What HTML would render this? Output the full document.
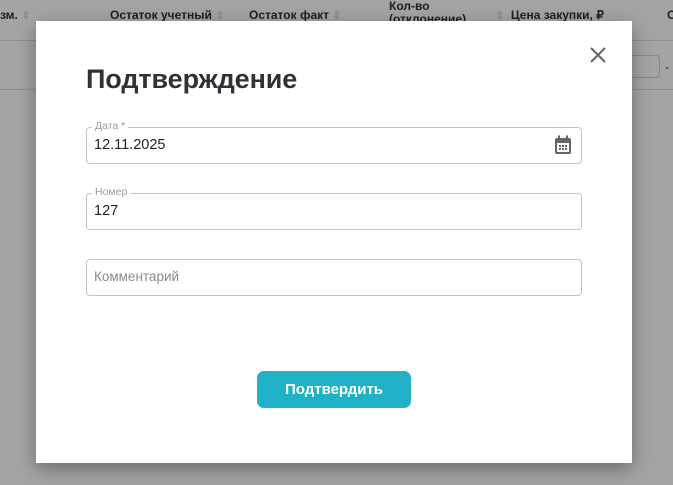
<!DOCTYPE html>
<html><head><style>
body{margin:0;width:673px;height:485px;overflow:hidden;background:#a4a4a4;font-family:"Liberation Sans",sans-serif;position:relative}
.h{position:absolute;font-size:12px;font-weight:bold;color:#1e1e1e}
.s{color:#8c8c8c;font-size:11px}
.line{position:absolute;left:0;right:0;height:1px;background:#8f8f8f}
.modal{position:absolute;left:36px;top:21px;width:596px;height:442px;background:#fff;box-shadow:0 6px 18px rgba(0,0,0,.35)}
.title{position:absolute;left:50px;top:43px;font-size:27px;font-weight:bold;color:#2f3337;letter-spacing:-0.1px}
.close{position:absolute;left:552px;top:24px}
.f{position:absolute;left:50px;width:494px;height:35px;border:1px solid #c4c4c4;border-radius:4px}
.lab{position:absolute;left:5px;top:-8px;background:#fff;padding:0 3px;font-size:10.5px;color:#9a9a9a}
.v{position:absolute;left:7px;top:9px;font-size:14.5px;color:#222}
.btn{position:absolute;left:221px;top:350px;width:154px;height:37px;background:#1fb2c6;border-radius:7px;color:#fff;font-weight:bold;font-size:15px;text-align:center;line-height:37px}
</style></head><body>
<div class="h" style="left:0;top:8px">зм. <span class="s">⇕</span></div>
<div class="h" style="left:110px;top:8px">Остаток учетный <span class="s">⇕</span></div>
<div class="h" style="left:249px;top:8px">Остаток факт <span class="s">⇕</span></div>
<div class="h" style="left:389px;top:0px;line-height:13px">Кол-во<br>(отклонение)</div>
<div class="h" style="left:495px;top:8px"><span class="s">⇕</span>&nbsp; Цена закупки, ₽</div>
<div class="h" style="left:667px;top:8px">С</div>
<div class="line" style="top:40px"></div>
<div class="line" style="top:89px"></div>
<div style="position:absolute;left:620px;top:55px;width:38px;height:21px;border:1px solid #888;border-radius:4px"></div>
<div class="h" style="left:665px;top:60px;font-weight:normal">-</div>
<div class="modal">
<div class="title">Подтверждение</div>
<svg class="close" width="20" height="20" viewBox="0 0 20 20"><path d="M3 3L17 17M17 3L3 17" stroke="#666" stroke-width="2"/></svg>
<div class="f" style="top:106px"><span class="lab">Дата <span style="color:#e07070">*</span></span><span class="v">12.11.2025</span>
<svg style="position:absolute;left:467px;top:7px" width="18" height="20" viewBox="0 0 18 20"><rect x="1" y="3" width="16" height="16" rx="2" fill="#666"/><rect x="3" y="8" width="12" height="9" fill="#fff"/><rect x="4" y="0.5" width="2" height="4" fill="#666"/><rect x="12" y="0.5" width="2" height="4" fill="#666"/><g fill="#666"><rect x="5" y="10" width="2" height="2"/><rect x="8" y="10" width="2" height="2"/><rect x="11" y="10" width="2" height="2"/><rect x="5" y="13" width="2" height="2"/><rect x="8" y="13" width="2" height="2"/><rect x="11" y="13" width="2" height="2"/></g></svg></div>
<div class="f" style="top:172px"><span class="lab">Номер</span><span class="v">127</span></div>
<div class="f" style="top:238px"><span class="v" style="color:#8a8a8a;font-size:13.5px">Комментарий</span></div>
<div class="btn">Подтвердить</div>
</div>
</body></html>
